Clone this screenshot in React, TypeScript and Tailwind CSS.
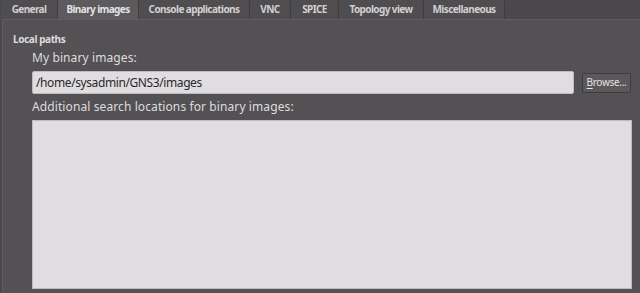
import React from "react";

const tabs = [
  { label: "General", w: "w-[57px]" },
  { label: "Binary images", w: "w-[81px]", active: true },
  { label: "Console applications", w: "w-[111px]" },
  { label: "VNC", w: "w-[41px]" },
  { label: "SPICE", w: "w-[48px]" },
  { label: "Topology view", w: "w-[85px]" },
  { label: "Miscellaneous", w: "w-[81px]" },
];

export default function App() {
  return (
    <div
      className="flex h-[293px] w-[640px] flex-col bg-[#4a484a] text-[#dedcde]"
      style={{ fontFamily: '"Noto Sans", "Open Sans", sans-serif' }}
    >
      {/* Tabs */}
      <div className="flex h-[19px] items-end pl-[1px]">
        {tabs.map((t) => (
          <div
            key={t.label}
            className={`flex h-[19px] shrink-0 items-center justify-center rounded-t-[2px] border-r border-[#3f3d3f] text-[10px] font-bold tracking-[-0.6px] ${t.w} ${
              t.active ? "bg-[#5c5a5c] text-[#e4e2e4]" : "bg-[#4f4d4f] text-[#d2d0d2]"
            }`}
          >
            {t.label}
          </div>
        ))}
      </div>

      {/* Pane */}
      <div className="ml-[2px] flex flex-1 flex-col border-l border-t border-[#5f5d5f] bg-[#535153] pb-[4px]">
        <div className="pl-[10px] pt-[12px] text-[10px] font-bold leading-[14px] tracking-[-0.4px]">Local paths</div>
        <div className="flex flex-1 flex-col pl-[29px] pr-[8px]">
          <div className="mt-[3px] text-[12px] leading-[18px] tracking-[0.1px]">My binary images:</div>
          <div className="mt-[4px] flex items-center">
            <div className="flex h-[23px] w-[542px] items-center rounded-[2px] border border-[#bdbbbd] bg-[#dfdddf] pl-[3px] text-[12px] tracking-[-0.4px] text-[#2a282a]">
              /home/sysadmin/GNS3/images
            </div>
            <div className="ml-[8px] flex h-[20px] w-[49px] items-center justify-center rounded-[2px] border border-[#3d3b3d] bg-[#5a585a] text-[10px] tracking-[-0.3px] text-[#e4e2e4]">
              <span className="underline underline-offset-2">B</span>rowse...
            </div>
          </div>
          <div className="mt-[4px] text-[12px] leading-[18px] tracking-[0.1px]">Additional search locations for binary images:</div>
          <div className="mt-[4px] flex-1 border border-[#bdbbbd] bg-[#dfdddf]"></div>
        </div>
      </div>
    </div>
  );
}
